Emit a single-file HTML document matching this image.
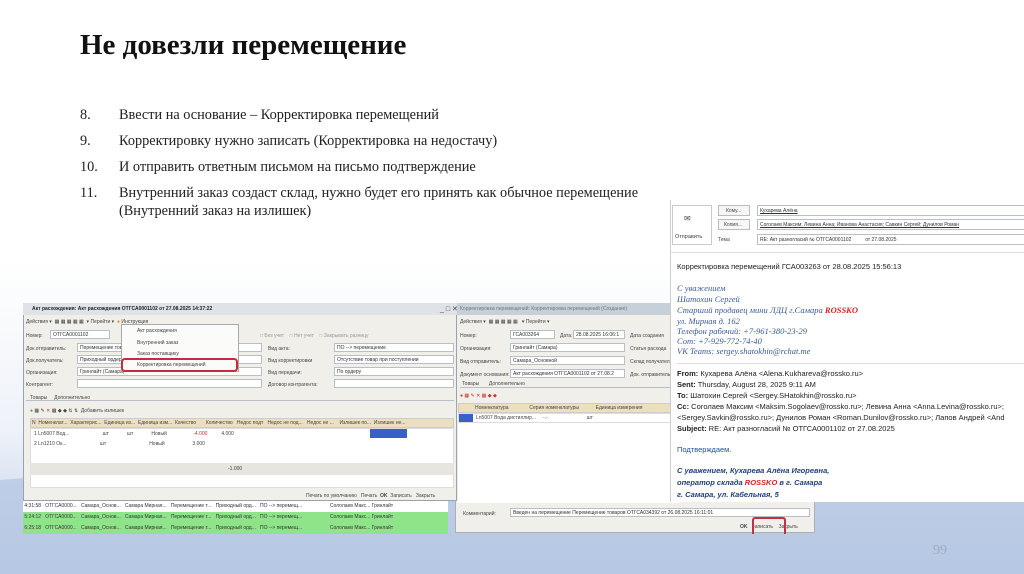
<!DOCTYPE html>
<html><head><meta charset="utf-8"><style>
*{margin:0;padding:0;box-sizing:border-box}
body{width:1024px;height:574px;overflow:hidden;position:relative;font-family:"Liberation Sans",sans-serif;background:#fff}
.bg{position:absolute;left:0;top:0;width:1024px;height:574px}
.abs{position:absolute}
h1{position:absolute;left:80px;top:29px;font:bold 29px "Liberation Serif",serif;color:#111;white-space:nowrap}
.li{position:absolute;left:80px;font:14.3px "Liberation Serif",serif;color:#222;white-space:nowrap}
.li span{position:absolute;left:39px}
.s{font-size:5px;color:#444;white-space:nowrap;position:absolute}
.fld{position:absolute;background:#fff;border:1px solid #b9bfc8;height:9px;font-size:5px;line-height:8px;padding-left:2px;color:#333;white-space:nowrap;overflow:hidden}
.row{position:absolute;height:11px;font-size:5px;line-height:11px;white-space:nowrap;color:#333}
.em{position:absolute;font-size:7.5px;color:#222;white-space:nowrap}
.it{position:absolute;font:italic 8.5px "Liberation Serif",serif;color:#3a5a9a;white-space:nowrap}
.bi{position:absolute;font:italic bold 7.5px "Liberation Sans",sans-serif;color:#1f3f7a;white-space:nowrap}
</style></head><body>
<svg class="bg" viewBox="0 0 1024 574">
<defs>
<linearGradient id="g" x1="0" y1="0" x2="0" y2="1">
<stop offset="0" stop-color="#ffffff"/><stop offset="0.45" stop-color="#ffffff"/><stop offset="0.75" stop-color="#eef2f9"/><stop offset="1" stop-color="#bccde6"/></linearGradient>
</defs>
<rect width="1024" height="574" fill="url(#g)"/>
<path d="M0 480 C300 455 700 505 1024 475 L1024 574 L0 574Z" fill="#b4c6e3" opacity="0.75"/>
</svg>
<h1>Не довезли перемещение</h1>
<div class="li" style="top:107px">8.<span>Ввести на основание – Корректировка перемещений</span></div>
<div class="li" style="top:133px">9.<span>Корректировку нужно записать (Корректировка на недостачу)</span></div>
<div class="li" style="top:159px">10.<span>И отправить ответным письмом на письмо подтверждение</span></div>
<div class="li" style="top:185px">11.<span>Внутренний заказ создаст склад, нужно будет его принять как обычное перемещение</span></div>
<div class="li" style="top:203px"><span>(Внутренний заказ на излишек)</span></div>

<!-- middle window -->
<div class="abs" style="left:455px;top:303px;width:360px;height:230px;background:#f0efe9;border:1px solid #a9b0b8"></div>
<div class="abs" style="left:455px;top:303px;width:230px;height:12px;background:#c7cfd9"></div>
<div class="s" style="left:460px;top:306px;color:#777">Корректировка перемещений: Корректировка перемещений (Создание)</div>
<div class="s" style="left:460px;top:319px">Действия ▾ &nbsp;▦ ▦ ▦ ▦ ▦ &nbsp; ▾ Перейти ▾</div>
<div class="s" style="left:460px;top:333px">Номер:</div><div class="fld" style="left:510px;top:330px;width:45px">ГСА003264</div>
<div class="s" style="left:560px;top:333px">Дата:</div><div class="fld" style="left:573px;top:330px;width:52px">28.08.2025 16:06:1</div>
<div class="s" style="left:630px;top:333px">Дата создания</div>
<div class="s" style="left:460px;top:346px">Организация:</div><div class="fld" style="left:510px;top:343px;width:115px">Гринлайт (Самара)</div><div class="s" style="left:630px;top:346px">Статья расхода</div>
<div class="s" style="left:460px;top:359px">Вид отправитель:</div><div class="fld" style="left:510px;top:356px;width:115px">Самара_Основной</div><div class="s" style="left:630px;top:359px">Склад получатель</div>
<div class="s" style="left:460px;top:372px">Документ основания:</div><div class="fld" style="left:510px;top:369px;width:115px">Акт расхождения ОТГСА0001102 от 27.08.2</div><div class="s" style="left:630px;top:372px">Док. отправитель</div>
<div class="abs" style="left:460px;top:380px;width:220px;height:8px;border-bottom:1px solid #b9bfc8"></div>
<div class="s" style="left:462px;top:381px">Товары &nbsp;&nbsp;&nbsp;&nbsp;&nbsp; Дополнительно</div>
<div class="s" style="left:460px;top:393px;color:#c33">● ▦ ✎ ✕ ▦ ◆ ◆</div>
<div class="abs" style="left:458px;top:403px;width:222px;height:10px;background:#ecdfbf;border:1px solid #ccc"></div>
<div class="s" style="left:475px;top:405px">Номенклатура &nbsp;&nbsp;&nbsp;&nbsp;&nbsp;&nbsp;&nbsp;&nbsp;&nbsp;&nbsp;&nbsp;&nbsp;&nbsp; Серия номенклатуры &nbsp;&nbsp;&nbsp;&nbsp;&nbsp;&nbsp;&nbsp;&nbsp;&nbsp;&nbsp; Единица измерения</div>
<div class="abs" style="left:458px;top:413px;width:222px;height:10px;background:#fff;border:1px solid #ddd"></div>
<div class="abs" style="left:459px;top:414px;width:14px;height:8px;background:#3a5fc8"></div>
<div class="s" style="left:476px;top:415px">Ln5007 Вода дистиллир... &nbsp;&nbsp;&nbsp; -.- &nbsp;&nbsp;&nbsp;&nbsp;&nbsp;&nbsp;&nbsp;&nbsp;&nbsp;&nbsp;&nbsp;&nbsp;&nbsp;&nbsp;&nbsp;&nbsp;&nbsp;&nbsp;&nbsp;&nbsp;&nbsp;&nbsp;&nbsp;&nbsp;&nbsp;&nbsp; шт</div>
<div class="abs" style="left:458px;top:423px;width:222px;height:80px;background:#fff"></div>
<div class="s" style="left:463px;top:511px">Комментарий:</div>
<div class="fld" style="left:510px;top:508px;width:300px">Введен на перемещение Перемещение товаров ОТГСА034392 от 26.08.2025 16:11:01</div>
<div class="s" style="left:740px;top:524px"><b>OK</b> &nbsp; Записать &nbsp;&nbsp; Закрыть</div>
<div class="abs" style="left:752px;top:517px;width:34px;height:17px;border-top:2px solid #c0304a;border-left:2px solid #c0304a;border-right:2px solid #c0304a;border-radius:3px 3px 0 0"></div>

<!-- left window -->
<div class="abs" style="left:23px;top:303px;width:434px;height:198px;background:#f0efe9;border:1px solid #9aa3ad"></div>
<div class="abs" style="left:23px;top:303px;width:434px;height:12px;background:#dfe3e8"></div>
<div class="s" style="left:32px;top:306px;color:#222"><b>Акт расхождения: Акт расхождения ОТГСА0001102 от 27.08.2025 14:37:22</b></div>
<div class="s" style="left:440px;top:305px;font-size:7px">_ □ ✕</div>
<div class="s" style="left:26px;top:319px">Действия ▾ &nbsp;▦ ▦ ▦ ▦ ▦ &nbsp;▾ Перейти ▾ &nbsp;<span style="color:#d90">●</span> Инструкция</div>
<div class="s" style="left:26px;top:333px">Номер:</div><div class="fld" style="left:50px;top:330px;width:60px">ОТГСА0001102</div>
<div class="s" style="left:260px;top:333px;color:#999">□ Без учет &nbsp;&nbsp; □ Нет учет &nbsp;&nbsp; □ Закрывать разницу</div>
<div class="s" style="left:26px;top:346px">Док.отправитель:</div><div class="fld" style="left:77px;top:343px;width:185px">Перемещение товаров</div>
<div class="s" style="left:268px;top:346px">Вид акта:</div><div class="fld" style="left:334px;top:343px;width:120px">ПО --> перемещение</div>
<div class="s" style="left:26px;top:358px">Док.получатель:</div><div class="fld" style="left:77px;top:355px;width:185px">Приходный ордер</div>
<div class="s" style="left:268px;top:358px">Вид корректировки</div><div class="fld" style="left:334px;top:355px;width:120px">Отсутствие товар при поступлении</div>
<div class="s" style="left:26px;top:370px">Организация:</div><div class="fld" style="left:77px;top:367px;width:185px">Гринлайт (Самара)</div>
<div class="s" style="left:268px;top:370px">Вид передачи:</div><div class="fld" style="left:334px;top:367px;width:120px">По ордеру</div>
<div class="s" style="left:26px;top:382px">Контрагент:</div><div class="fld" style="left:77px;top:379px;width:185px"></div>
<div class="s" style="left:268px;top:382px">Договор контрагента:</div><div class="fld" style="left:334px;top:379px;width:120px"></div>
<div class="abs" style="left:26px;top:393px;width:428px;height:8px;border-bottom:1px solid #b9bfc8"></div>
<div class="s" style="left:30px;top:395px">Товары &nbsp;&nbsp;&nbsp; Дополнительно</div>
<div class="s" style="left:30px;top:408px"><span style="color:#4a4">●</span> ▦ ✎ <span style="color:#c33">✕</span> ▦ ◆ ◆ ⇅ ⇅ &nbsp;Добавить излишек</div>
<div class="abs" style="left:30px;top:418px;width:424px;height:10px;background:#ecdfbf;border:1px solid #ccc"></div>
<div class="s" style="left:32px;top:420px">N &nbsp;Номенклат... &nbsp;Характерис... &nbsp;Единица из... &nbsp;Единица изм... &nbsp;Качество &nbsp;&nbsp;&nbsp;&nbsp;&nbsp; Количество &nbsp; Недос подт &nbsp; Недос не под... &nbsp; Недос не ... &nbsp;&nbsp; Излишек по... &nbsp;Излишек не...</div>
<div class="abs" style="left:30px;top:428px;width:424px;height:60px;background:#fff;border:1px solid #ddd"></div>
<div class="abs" style="left:370px;top:429px;width:37px;height:9px;background:#3a5fc8"></div>
<div class="s" style="left:34px;top:431px">1 Ln5007 Вод... &nbsp;&nbsp;&nbsp;&nbsp;&nbsp;&nbsp;&nbsp;&nbsp;&nbsp;&nbsp;&nbsp;&nbsp;&nbsp;&nbsp;&nbsp;&nbsp;&nbsp;&nbsp;&nbsp;&nbsp;&nbsp;&nbsp; шт &nbsp;&nbsp;&nbsp;&nbsp;&nbsp;&nbsp;&nbsp;&nbsp;&nbsp;&nbsp;&nbsp; шт &nbsp;&nbsp;&nbsp;&nbsp;&nbsp;&nbsp;&nbsp;&nbsp;&nbsp;&nbsp;&nbsp; Новый &nbsp;&nbsp;&nbsp;&nbsp;&nbsp;&nbsp;&nbsp;&nbsp;&nbsp;&nbsp;&nbsp;&nbsp;&nbsp;&nbsp;&nbsp;&nbsp;&nbsp; <span style="color:#c33">-4.000</span> &nbsp;&nbsp;&nbsp;&nbsp;&nbsp;&nbsp;&nbsp;&nbsp; 4.000</div>
<div class="s" style="left:34px;top:441px">2 Ln1210 Ок... &nbsp;&nbsp;&nbsp;&nbsp;&nbsp;&nbsp;&nbsp;&nbsp;&nbsp;&nbsp;&nbsp;&nbsp;&nbsp;&nbsp;&nbsp;&nbsp;&nbsp;&nbsp;&nbsp;&nbsp;&nbsp;&nbsp; шт &nbsp;&nbsp;&nbsp;&nbsp;&nbsp;&nbsp;&nbsp;&nbsp;&nbsp;&nbsp;&nbsp;&nbsp;&nbsp;&nbsp;&nbsp;&nbsp;&nbsp;&nbsp;&nbsp;&nbsp;&nbsp;&nbsp;&nbsp;&nbsp;&nbsp;&nbsp;&nbsp;&nbsp;&nbsp; Новый &nbsp;&nbsp;&nbsp;&nbsp;&nbsp;&nbsp;&nbsp;&nbsp;&nbsp;&nbsp;&nbsp;&nbsp;&nbsp;&nbsp;&nbsp;&nbsp;&nbsp;&nbsp; 3.000</div>
<div class="abs" style="left:30px;top:463px;width:424px;height:12px;background:#e6e5df"></div>
<div class="s" style="left:228px;top:466px">-1.000</div>
<div class="s" style="left:306px;top:493px">Печать по умолчанию &nbsp; Печать &nbsp;<b>OK</b> &nbsp;Записать &nbsp; Закрыть</div>
<!-- popup menu -->
<div class="abs" style="left:121px;top:324px;width:118px;height:48px;background:#fbfbf9;border:1px solid #aaa"></div>
<div class="s" style="left:137px;top:328px">Акт расхождения</div>
<div class="s" style="left:137px;top:340px">Внутренний заказ</div>
<div class="s" style="left:137px;top:351px">Заказ поставщику</div>
<div class="s" style="left:137px;top:362px">Корректировка перемещений</div>
<div class="abs" style="left:121px;top:358px;width:117px;height:14px;border:2px solid #c82a3a;border-radius:4px"></div>
<!-- list rows -->
<div class="row" style="left:23px;top:501px;width:425px;background:#fff">&nbsp;4:31:58 &nbsp; ОТГСА0000... &nbsp; Самара_Основ... &nbsp; Самара Мирная... &nbsp; Перемещение т... &nbsp; Приходный орд... &nbsp; ПО --> перемещ... &nbsp;&nbsp;&nbsp;&nbsp;&nbsp;&nbsp;&nbsp;&nbsp;&nbsp;&nbsp;&nbsp;&nbsp;&nbsp;&nbsp;&nbsp;&nbsp;&nbsp;&nbsp; Сололаев Макс... Гринлайт</div>
<div class="row" style="left:23px;top:512px;width:425px;background:#8fe48a">&nbsp;5:24:12 &nbsp; ОТГСА0000... &nbsp; Самара_Основ... &nbsp; Самара Мирная... &nbsp; Перемещение т... &nbsp; Приходный орд... &nbsp; ПО --> перемещ... &nbsp;&nbsp;&nbsp;&nbsp;&nbsp;&nbsp;&nbsp;&nbsp;&nbsp;&nbsp;&nbsp;&nbsp;&nbsp;&nbsp;&nbsp;&nbsp;&nbsp;&nbsp; Сололаев Макс... Гринлайт</div>
<div class="row" style="left:23px;top:523px;width:425px;background:#8fe48a">&nbsp;6:25:18 &nbsp; ОТГСА0000... &nbsp; Самара_Основ... &nbsp; Самара Мирная... &nbsp; Перемещение т... &nbsp; Приходный орд... &nbsp; ПО --> перемещ... &nbsp;&nbsp;&nbsp;&nbsp;&nbsp;&nbsp;&nbsp;&nbsp;&nbsp;&nbsp;&nbsp;&nbsp;&nbsp;&nbsp;&nbsp;&nbsp;&nbsp;&nbsp; Сололаев Макс... Гринлайт</div>

<!-- email -->
<div class="abs" style="left:670px;top:200px;width:354px;height:302px;background:#fff;border-left:1px solid #ccc"></div>
<div class="abs" style="left:672px;top:205px;width:40px;height:40px;border:1px solid #ccc"></div>
<div class="s" style="left:684px;top:214px;font-size:8px">✉</div>
<div class="s" style="left:675px;top:234px;font-size:5.5px">Отправить</div>
<div class="abs" style="left:718px;top:205px;width:32px;height:11px;border:1px solid #bbb;background:#f6f6f6"></div><div class="s" style="left:726px;top:208px">Кому...</div>
<div class="abs" style="left:718px;top:219px;width:32px;height:11px;border:1px solid #bbb;background:#f6f6f6"></div><div class="s" style="left:724px;top:222px">Копия...</div>
<div class="s" style="left:718px;top:237px">Тема</div>
<div class="fld" style="left:757px;top:205px;width:270px;height:11px;line-height:10px;text-decoration:underline">Кухарева Алёна</div>
<div class="fld" style="left:757px;top:219px;width:270px;height:11px;line-height:10px;text-decoration:underline">Соголаев Максим; Левина Анна; Иванова Анастасия; Савкин Сергей; Дунилов Роман</div>
<div class="fld" style="left:757px;top:234px;width:270px;height:11px;line-height:10px">RE: Акт разногласий № ОТГСА0001102 &nbsp;&nbsp;&nbsp;&nbsp;&nbsp;&nbsp;&nbsp;&nbsp; от 27.08.2025</div>
<div class="abs" style="left:670px;top:252px;width:354px;height:1px;background:#ddd"></div>
<div class="em" style="left:677px;top:262px">Корректировка перемещений ГСА003263 от 28.08.2025 15:56:13</div>
<div class="it" style="left:677px;top:283px">С уважением</div>
<div class="it" style="left:677px;top:294px">Шатохин Сергей</div>
<div class="it" style="left:677px;top:305px">Старший продавец мини ЛДЦ г.Самара <b style="color:#d22">ROSSKO</b></div>
<div class="it" style="left:677px;top:316px">ул. Мирная д. 162</div>
<div class="it" style="left:677px;top:326px">Телефон рабочий: +7-961-380-23-29</div>
<div class="it" style="left:677px;top:336px">Сот: +7-929-772-74-40</div>
<div class="it" style="left:677px;top:346px">VK Teams: sergey.shatokhin@rchat.me</div>
<div class="abs" style="left:677px;top:363px;width:347px;height:1px;background:#ddd"></div>
<div class="em" style="left:677px;top:369px"><b>From:</b> Кухарева Алёна &lt;Alena.Kukhareva@rossko.ru&gt;</div>
<div class="em" style="left:677px;top:380px"><b>Sent:</b> Thursday, August 28, 2025 9:11 AM</div>
<div class="em" style="left:677px;top:391px"><b>To:</b> Шатохин Сергей &lt;Sergey.SHatokhin@rossko.ru&gt;</div>
<div class="em" style="left:677px;top:402px"><b>Cc:</b> Соголаев Максим &lt;Maksim.Sogolaev@rossko.ru&gt;; Левина Анна &lt;Anna.Levina@rossko.ru&gt;;</div>
<div class="em" style="left:677px;top:413px">&lt;Sergey.Savkin@rossko.ru&gt;; Дунилов Роман &lt;Roman.Dunilov@rossko.ru&gt;; Лапов Андрей &lt;And</div>
<div class="em" style="left:677px;top:424px"><b>Subject:</b> RE: Акт разногласий № ОТГСА0001102 от 27.08.2025</div>
<div class="em" style="left:677px;top:445px;color:#1f4f9a">Подтверждаем.</div>
<div class="bi" style="left:677px;top:466px">С уважением, Кухарева Алёна Игоревна,</div>
<div class="bi" style="left:677px;top:478px">оператор склада <span style="color:#e0202a">ROSSKO</span> в г. Самара</div>
<div class="bi" style="left:677px;top:490px">г. Самара, ул. Кабельная, 5</div>

<div class="abs" style="left:933px;top:543px;font:14px 'Liberation Serif',serif;color:#a0abbb">99</div>
</body></html>
